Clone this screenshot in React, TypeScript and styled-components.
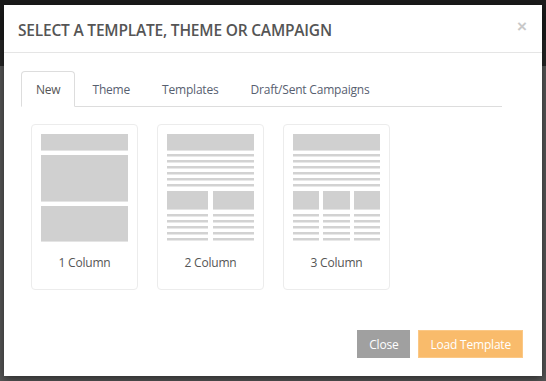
import React from "react";
import styled, { createGlobalStyle } from "styled-components";

const GlobalStyle = createGlobalStyle`
  html, body {
    margin: 0;
    padding: 0;
  }
  body {
    width: 546px;
    height: 381px;
    overflow: hidden;
    font-family: "Open Sans", "Liberation Sans", sans-serif;
    background: linear-gradient(#1b1b1b 0 40px, #262626 40px 66px, #575757 66px);
  }
`;

const Backdrop = styled.div`
  padding: 5px 4px;
`;

const Modal = styled.div`
  width: 538px;
  height: 371px;
  background: #fff;
  box-shadow: 0 3px 9px rgba(0, 0, 0, 0.5);
  display: flex;
  flex-direction: column;
  box-sizing: border-box;
`;

const Header = styled.div`
  height: 48px;
  box-sizing: border-box;
  border-bottom: 1px solid #e5e5e5;
  display: flex;
  align-items: center;
  justify-content: space-between;
  padding: 0 15px 0 14px;
`;

const Title = styled.h4`
  margin: 0;
  font-size: 15.5px;
  font-weight: 600;
  color: #555;
  text-transform: uppercase;
  letter-spacing: -0.2px;
  padding-top: 2px;
`;

const CloseX = styled.button`
  border: none;
  background: none;
  padding: 0;
  font-family: "Liberation Sans", sans-serif;
  font-size: 17px;
  font-weight: 700;
  color: #c9c9c9;
  line-height: 1;
  margin-top: -4px;
  cursor: pointer;
`;

const Body = styled.div`
  padding: 18px 40px 0 17px;
`;

const TabList = styled.ul`
  list-style: none;
  margin: 0;
  padding: 0;
  display: flex;
  border-bottom: 1px solid #ddd;
`;

const Tab = styled.li<{ $active?: boolean }>`
  margin: 0 2px -1px 0;
  padding: 9px 14px 7px;
  font-size: 12px;
  letter-spacing: -0.2px;
  line-height: 18px;
  color: ${(p) => (p.$active ? "#555" : "#576070")};
  border: 1px solid ${(p) => (p.$active ? "#ddd" : "transparent")};
  border-bottom-color: ${(p) => (p.$active ? "#fff" : "transparent")};
  border-radius: 4px 4px 0 0;
  background: ${(p) => (p.$active ? "#fff" : "transparent")};
`;

const Cards = styled.div`
  display: flex;
  gap: 19px;
  padding: 17px 0 0 10px;
`;

const Card = styled.div`
  width: 107px;
  height: 166px;
  box-sizing: border-box;
  border: 1px solid #ececec;
  border-radius: 4px;
  padding: 2px 3px 0;
  display: flex;
  flex-direction: column;
  align-items: center;
`;

const Thumb = styled.div<{ $gap: number }>`
  width: 99px;
  height: 121px;
  box-sizing: border-box;
  padding: 7px 6px 0;
  display: flex;
  flex-direction: column;
  gap: ${(p) => p.$gap}px;
`;

const Block = styled.div<{ $h: number }>`
  height: ${(p) => p.$h}px;
  flex: none;
  background: #d0d0d0;
  border-bottom: 1px solid #e4e4e4;
`;

const Lines = styled.div`
  display: flex;
  flex-direction: column;
  gap: 3px;
`;

const Line = styled.div`
  height: 2px;
  background: #d2d2d2;
  border-bottom: 1px solid #e8e8e8;
`;

const Columns = styled.div<{ $gap: number }>`
  display: flex;
  gap: ${(p) => p.$gap}px;
  margin-top: 1px;
`;

const Column = styled.div`
  flex: 1;
  display: flex;
  flex-direction: column;
  gap: 4px;
`;

const Label = styled.div`
  margin-top: 6px;
  font-size: 12px;
  letter-spacing: -0.2px;
  line-height: 18px;
  color: #555;
`;

const Footer = styled.div`
  margin-top: auto;
  display: flex;
  justify-content: flex-end;
  gap: 8px;
  padding: 0 19px 18px;
`;

const Button = styled.button<{ $primary?: boolean }>`
  height: 28px;
  box-sizing: border-box;
  padding: 0 11px;
  font-family: "Open Sans", "Liberation Sans", sans-serif;
  font-size: 12px;
  letter-spacing: -0.2px;
  color: #fff;
  background: ${(p) => (p.$primary ? "#f9bb6b" : "#a0a0a0")};
  border: 1px solid ${(p) => (p.$primary ? "#fbc886" : "#a0a0a0")};
  border-radius: 0;
  cursor: pointer;
`;

function TextLines({ count }: { count: number }) {
  return (
    <Lines>
      {Array.from({ length: count }).map((_, i) => (
        <Line key={i} />
      ))}
    </Lines>
  );
}

function MultiColumn({ cols, gap }: { cols: number; gap: number }) {
  return (
    <Thumb $gap={3}>
      <Block $h={16} />
      <TextLines count={6} />
      <Columns $gap={gap}>
        {Array.from({ length: cols }).map((_, i) => (
          <Column key={i}>
            <Block $h={18} />
            <TextLines count={5} />
          </Column>
        ))}
      </Columns>
    </Thumb>
  );
}

export default function App() {
  const tabs = ["New", "Theme", "Templates", "Draft/Sent Campaigns"];
  return (
    <>
      <GlobalStyle />
      <Backdrop>
        <Modal>
          <Header>
            <Title>Select a Template, Theme or Campaign</Title>
            <CloseX>×</CloseX>
          </Header>
          <Body>
            <TabList>
              {tabs.map((t, i) => (
                <Tab key={t} $active={i === 0}>
                  {t}
                </Tab>
              ))}
            </TabList>
            <Cards>
              <Card>
                <Thumb $gap={4}>
                  <Block $h={16} />
                  <Block $h={46} />
                  <Block $h={35} />
                </Thumb>
                <Label>1 Column</Label>
              </Card>
              <Card>
                <MultiColumn cols={2} gap={5} />
                <Label>2 Column</Label>
              </Card>
              <Card>
                <MultiColumn cols={3} gap={4} />
                <Label>3 Column</Label>
              </Card>
            </Cards>
          </Body>
          <Footer>
            <Button>Close</Button>
            <Button $primary>Load Template</Button>
          </Footer>
        </Modal>
      </Backdrop>
    </>
  );
}
